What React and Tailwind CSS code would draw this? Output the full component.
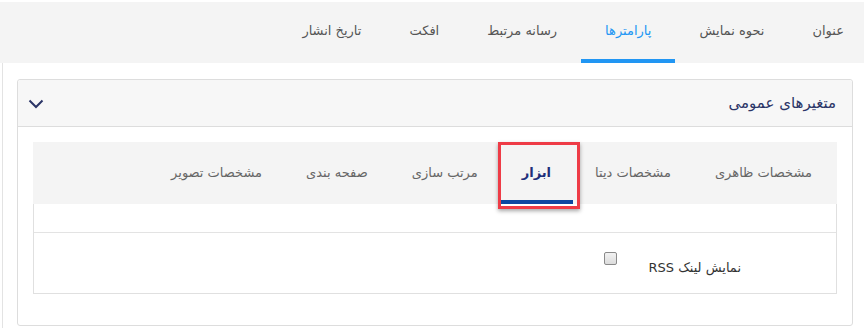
import React from "react";

const topTabs = ["عنوان", "نحوه نمایش", "پارامترها", "رسانه مرتبط", "افکت", "تاریخ انشار"];
const innerTabs = ["مشخصات ظاهری", "مشخصات دیتا", "ابزار", "مرتب سازی", "صفحه بندی", "مشخصات تصویر"];

export default function App() {
  return (
    <div
      dir="rtl"
      className="w-[864px] h-[328px] overflow-hidden bg-white text-[13px]"
      style={{ fontFamily: '"DejaVu Sans", "Noto Sans", sans-serif' }}
    >
      {/* top tabs */}
      <div className="mt-[2px] h-[61px] bg-[#f4f4f4] flex items-stretch -mr-[4px]">
        {topTabs.map((t, i) => (
          <div
            key={t}
            className={
              "px-6 flex items-center border-b-[4px] pt-[1px] " +
              (i === 2
                ? "border-[#2196f3] text-[#2196f3]"
                : "border-transparent text-[#555]")
            }
          >
            {t}
          </div>
        ))}
      </div>

      {/* outer panel */}
      <div className="ml-[2px] border-l border-[#e3e3e3] pl-[14px] pr-[11px] pt-[16px] h-[265px]">
        <div className="border border-[#dddddd] rounded-[3px] bg-white">
          <div className="h-[47px] bg-[#f7f7f7] border-b border-[#dddddd] rounded-t-[3px] flex items-center justify-between pr-[16px] pl-[10px]">
            <div className="text-[15px] text-[#2b3567]">متغیرهای عمومی</div>
            <svg width="16" height="10" viewBox="0 0 16 10" className="mt-[2px]">
              <polyline points="1.5,1.5 8,8 14.5,1.5" fill="none" stroke="#2b3567" strokeWidth="2" />
            </svg>
          </div>

          <div className="pt-[15px] px-[15px] pb-[31px]">
            <div className="relative">
              <div className="h-[62px] bg-[#f4f4f4] flex items-stretch pr-[3px]">
                {innerTabs.map((t, i) => (
                  <div
                    key={t}
                    className={
                      "px-[22px] flex items-center border-b-[4px] pt-[3px] " +
                      (i === 2
                        ? "border-[#0d47a1] text-[#1f2f7a] font-bold"
                        : "border-transparent text-[#666]")
                    }
                  >
                    {t}
                  </div>
                ))}
              </div>
              <div className="border-x border-b border-[#e0e0e0]">
                <div className="h-[29px] border-b border-[#e3e3e3]"></div>
                <div className="h-[60px] flex items-start pr-[95px]">
                  <div className="mt-[25px] text-[#333]">نمایش لینک RSS</div>
                  <span className="mt-[19px] mr-[31px] w-[13px] h-[13px] rounded-[2px] border border-[#8a8a8a] bg-gradient-to-b from-[#f2f2f2] to-[#dcdcdc]"></span>
                </div>
              </div>
              {/* annotation highlight */}
              <div className="absolute top-0 left-[465px] w-[82px] h-[67px] border-[3px] border-[#ee3b46] shadow-[0_2px_4px_rgba(0,0,0,0.35)]"></div>
            </div>
          </div>
        </div>
      </div>
    </div>
  );
}
